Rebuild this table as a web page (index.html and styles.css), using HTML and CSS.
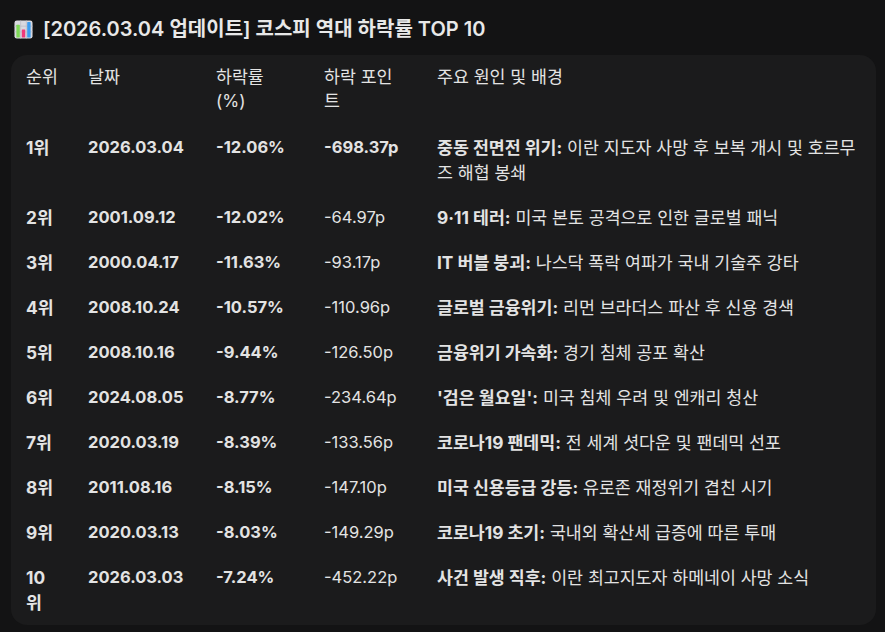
FILE: index.html
```html
<!DOCTYPE html>
<html lang="ko">
<head>
<meta charset="utf-8">
<title>코스피 역대 하락률 TOP 10</title>
<link rel="stylesheet" href="styles.css">
</head>
<body>
<div class="page">
  <h2 class="title">
    <svg class="emoji" viewBox="0 0 20 20" width="20" height="20" aria-hidden="true">
      <rect x="0.5" y="0.5" width="19" height="19" rx="2.5" fill="#d9d9e0"/>
      <path d="M0.5 6.5H19.5M0.5 12.5H19.5M7 0.5V19.5M13 0.5V19.5" stroke="#bdbdc6" stroke-width="0.8"/>
      <rect x="2.5" y="5" width="3.6" height="13.5" rx="0.6" fill="#7ed957"/>
      <rect x="8.2" y="10" width="3.6" height="8.5" rx="0.6" fill="#f0387a"/>
      <rect x="13.9" y="2.2" width="3.6" height="16.3" rx="0.6" fill="#3c9cf0"/>
    </svg>
    <span>[2026.03.04 업데이트] 코스피 역대 하락률 TOP 10</span>
  </h2>
  <div class="card">
    <table class="tbl">
      <colgroup>
        <col class="c1"><col class="c2"><col class="c3"><col class="c4"><col class="c5">
      </colgroup>
      <thead>
        <tr><th>순위</th><th>날짜</th><th>하락률 (%)</th><th>하락 포인트</th><th>주요 원인 및 배경</th></tr>
      </thead>
      <tbody>
        <tr><td class="b">1위</td><td class="b">2026.03.04</td><td class="b">-12.06%</td><td class="b">-698.37p</td><td><b>중동 전면전 위기:</b> 이란 지도자 사망 후 보복 개시 및 호르무즈 해협 봉쇄</td></tr>
        <tr><td class="b">2위</td><td class="b">2001.09.12</td><td class="b">-12.02%</td><td>-64.97p</td><td><b>9·11 테러:</b> 미국 본토 공격으로 인한 글로벌 패닉</td></tr>
        <tr><td class="b">3위</td><td class="b">2000.04.17</td><td class="b">-11.63%</td><td>-93.17p</td><td><b>IT 버블 붕괴:</b> 나스닥 폭락 여파가 국내 기술주 강타</td></tr>
        <tr><td class="b">4위</td><td class="b">2008.10.24</td><td class="b">-10.57%</td><td>-110.96p</td><td><b>글로벌 금융위기:</b> 리먼 브라더스 파산 후 신용 경색</td></tr>
        <tr><td class="b">5위</td><td class="b">2008.10.16</td><td class="b">-9.44%</td><td>-126.50p</td><td><b>금융위기 가속화:</b> 경기 침체 공포 확산</td></tr>
        <tr><td class="b">6위</td><td class="b">2024.08.05</td><td class="b">-8.77%</td><td>-234.64p</td><td><b>'검은 월요일':</b> 미국 침체 우려 및 엔캐리 청산</td></tr>
        <tr><td class="b">7위</td><td class="b">2020.03.19</td><td class="b">-8.39%</td><td>-133.56p</td><td><b>코로나19 팬데믹:</b> 전 세계 셧다운 및 팬데믹 선포</td></tr>
        <tr><td class="b">8위</td><td class="b">2011.08.16</td><td class="b">-8.15%</td><td>-147.10p</td><td><b>미국 신용등급 강등:</b> 유로존 재정위기 겹친 시기</td></tr>
        <tr><td class="b">9위</td><td class="b">2020.03.13</td><td class="b">-8.03%</td><td>-149.29p</td><td><b>코로나19 초기:</b> 국내외 확산세 급증에 따른 투매</td></tr>
        <tr><td class="b">10위</td><td class="b">2026.03.03</td><td class="b">-7.24%</td><td>-452.22p</td><td><b>사건 발생 직후:</b> 이란 최고지도자 하메네이 사망 소식</td></tr>
      </tbody>
    </table>
  </div>
</div>
</body>
</html>
```
FILE: styles.css
```css
html, body {
  margin: 0;
  padding: 0;
  background: #131314;
}
body {
  color: #e3e3e3;
  font-family: Inter, "Noto Sans CJK KR", sans-serif;
  font-size: 16px;
}
.page {
  padding: 17px 9px 0 11px;
}
.title {
  display: flex;
  align-items: center;
  gap: 10px;
  margin: 0 0 14px 3px;
  font-size: 20px;
  font-weight: 600;
  line-height: 24px;
  color: #e8e8e8;
}
.emoji {
  width: 19px;
  height: 19px;
  flex: none;
}
.card {
  background: #1b1b1c;
  border-radius: 16px;
  width: 865px;
  overflow: hidden;
}
.tbl {
  border-collapse: collapse;
  table-layout: fixed;
  width: 865px;
}
.c1 { width: 62px; }
.c2 { width: 128px; }
.c3 { width: 108px; }
.c4 { width: 113px; }
.c5 { width: 454px; }
.tbl th, .tbl td {
  padding: 10px 14px 10px 15px;
  text-align: left;
  vertical-align: top;
  line-height: 25px;
  font-size: 17.3px;
}
.tbl th {
  font-weight: 400;
  line-height: 24px;
  padding-bottom: 11.5px;
}
.tbl th:nth-child(3), .tbl td:nth-child(3) { padding-right: 21px; }
.tbl th:nth-child(4), .tbl td:nth-child(4) { padding-right: 22px; }
.tbl th:nth-child(5), .tbl td:nth-child(5) { padding-right: 11px; }
.tbl td:nth-child(2), .tbl td:nth-child(3), .tbl td:nth-child(4) {
  font-size: 16.5px;
}
.tbl td.b, .tbl td b {
  font-weight: 700;
}
```
